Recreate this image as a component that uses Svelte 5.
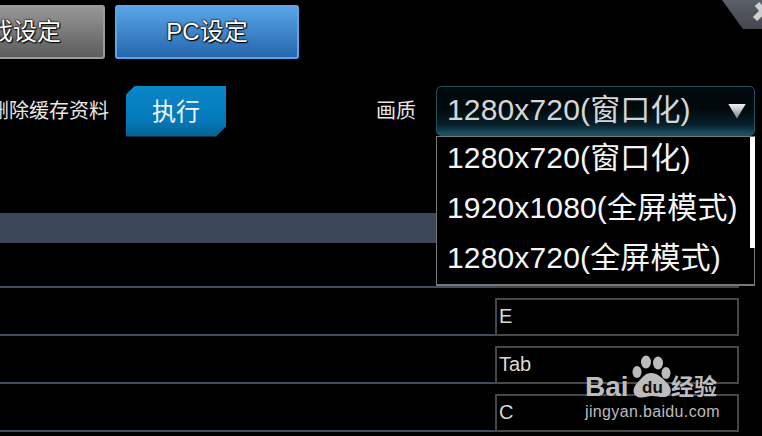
<script lang="ts">
	const options = ['1280x720(窗口化)', '1920x1080(全屏模式)', '1280x720(全屏模式)'];
	const keys = ['', 'E', 'Tab', 'C'];
</script>

<div class="page">
	<div class="tabs">
		<button class="tab gray">游戏设定</button>
		<button class="tab blue">PC设定</button>
	</div>

	<div class="options">
		<div class="cache">
			<span class="label">删除缓存资料</span>
			<button class="run">执行</button>
		</div>
		<div class="quality">
			<span class="label">画质</span>
			<div class="select">
				<span>{options[0]}</span>
				<i class="arrow"></i>
			</div>
		</div>
	</div>

	<div class="band"></div>

	<div class="rows">
		{#each keys as key}
			<div class="row">
				<div class="line"></div>
				<div class="key">{key}</div>
			</div>
		{/each}
	</div>

	<ul class="menu">
		{#each options as opt}
			<li>{opt}</li>
		{/each}
		<i class="thumb"></i>
	</ul>

	<div class="close">
		<svg width="42" height="29" viewBox="0 0 42 29">
			<defs>
				<linearGradient id="closeFill" x1="0" y1="0" x2="0" y2="1">
					<stop offset="0" stop-color="#5a6068" />
					<stop offset="1" stop-color="#43474e" />
				</linearGradient>
			</defs>
			<path d="M2 0H42V29H23Z" fill="url(#closeFill)" />
			<path d="M35 19 44 10M37 4 44 12" stroke="#cfcfcf" stroke-width="6" fill="none" />
		</svg>
	</div>

	<div class="mark">
		<div class="paw">
			<svg width="40" height="44" viewBox="0 0 40 44">
				<g fill="#bcbcbc">
					<ellipse cx="14" cy="7" rx="5" ry="6.5" />
					<ellipse cx="26" cy="8" rx="5" ry="6.5" />
					<ellipse cx="5" cy="17" rx="4.5" ry="6" />
					<ellipse cx="34" cy="18" rx="4.5" ry="6" />
					<path d="M19 18C25 18 31 23 35 28 39 32 40 37 37 40 33 44 26 41 20 41 14 41 8 45 3 40 0 36 2 31 6 27 10 23 13 18 19 18Z" />
				</g>
			</svg>
			<b>du</b>
		</div>
		<div class="brand"><b>Bai</b><span>经验</span></div>
		<div class="url">jingyan.baidu.com</div>
	</div>
</div>

<style>
	:global(body) {
		margin: 0;
		background: #000;
	}
	.page {
		position: relative;
		width: 762px;
		height: 436px;
		overflow: hidden;
		background: #000;
		color: #e6e6e6;
		font-family: "Liberation Sans", "Noto Sans CJK SC", sans-serif;
	}
	.tabs {
		display: flex;
		justify-content: flex-end;
		gap: 10px;
		width: 299px;
		padding-top: 5px;
	}
	.tab {
		flex: none;
		width: 184px;
		height: 54px;
		box-sizing: border-box;
		padding: 0 0 5px;
		border-radius: 3px;
		color: #fff;
		font: inherit;
		font-size: 24px;
		text-shadow: 0 0 2px #000, 0 0 2px #000, 1px 1px 1px #000;
	}
	.gray {
		border: 2px solid #9a9a9a;
		background: linear-gradient(#979797, #5c5c5c);
	}
	.blue {
		border: 2px solid #5ba6ea;
		background: linear-gradient(#5aa5e8, #2566ae);
	}
	.options {
		display: flex;
		margin-top: 27px;
		height: 50px;
	}
	.cache {
		display: flex;
		align-items: center;
		flex: none;
		width: 387px;
		margin-left: -11px;
		gap: 17px;
	}
	.label {
		font-size: 20px;
		padding-bottom: 4px;
		color: #e6e6e6;
	}
	.run {
		width: 100px;
		height: 51px;
		padding: 0 0 4px;
		border: none;
		color: #eef6fb;
		font: inherit;
		font-size: 24px;
		background: linear-gradient(#0a86c8, #0478b8 70%, #06608f);
		clip-path: polygon(9px 0, 100% 0, 100% 41px, 90px 100%, 0 100%, 0 9px);
	}
	.quality {
		display: flex;
		align-items: center;
		gap: 20px;
	}
	.select {
		display: flex;
		align-items: center;
		justify-content: space-between;
		box-sizing: border-box;
		width: 319px;
		height: 50px;
		padding: 0 8px 8px 10px;
		border: 1px solid #24525c;
		border-radius: 5px;
		background: linear-gradient(#02090c 45%, #07202a 78%, #1d5563);
		color: #d6d6d6;
		font-size: 30px;
		letter-spacing: 0.15px;
	}
	.arrow {
		width: 18px;
		height: 15px;
		margin-top: 8px;
		background: linear-gradient(#f2f2f2, #7c7c7c);
		clip-path: polygon(0 0, 100% 0, 50% 100%);
	}
	.band {
		height: 30px;
		width: 739px;
		margin-top: 77px;
		background: #3b4759;
	}
	.rows {
		display: flex;
		flex-direction: column;
		gap: 10px;
		margin-top: 7px;
	}
	.row {
		display: flex;
		align-items: flex-end;
		height: 38px;
		width: 739px;
	}
	.line {
		flex: 1;
		height: 2px;
		background: #414a5e;
	}
	.key {
		flex: none;
		box-sizing: border-box;
		width: 244px;
		height: 38px;
		padding-left: 2px;
		border: 2px solid #474747;
		color: #d8d8d8;
		font-size: 20px;
		line-height: 32px;
	}
	.menu {
		position: absolute;
		left: 436px;
		top: 136px;
		box-sizing: border-box;
		width: 319px;
		height: 150px;
		margin: 0;
		padding: 0 0 0 10px;
		list-style: none;
		border: 1px solid #777;
		border-bottom-width: 2px;
		background: #000;
		color: #f5f5f5;
		font-size: 30px;
		letter-spacing: 0.15px;
	}
	.menu li {
		height: 50px;
		line-height: 42px;
	}
	.thumb {
		position: absolute;
		right: -1px;
		top: 0;
		width: 5px;
		height: 111px;
		background: #fff;
	}
	.close {
		position: absolute;
		right: 0;
		top: 0;
		line-height: 0;
	}
	.mark {
		position: absolute;
		left: 585px;
		top: 355px;
		width: 140px;
		color: #bcbcbc;
	}
	.paw {
		position: absolute;
		left: 47px;
		top: 0;
		width: 40px;
		height: 44px;
	}
	.paw b {
		position: absolute;
		left: 10px;
		top: 24px;
		color: #111;
		font-size: 17px;
		line-height: 18px;
	}
	.brand {
		display: flex;
		align-items: center;
		justify-content: space-between;
		width: 132px;
		padding-top: 17px;
		height: 30px;
	}
	.brand b {
		font-size: 28px;
		line-height: 30px;
	}
	.brand span {
		font-size: 23px;
		font-weight: bold;
		line-height: 30px;
	}
	.url {
		margin-top: 0;
		font-size: 16px;
		letter-spacing: 0.35px;
		line-height: 20px;
	}
</style>
